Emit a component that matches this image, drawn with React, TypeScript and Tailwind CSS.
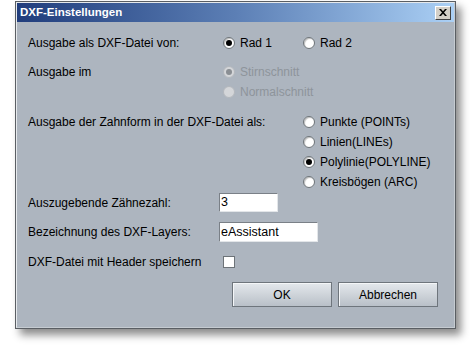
import React from "react";

function Radio({ checked = false, disabled = false }: { checked?: boolean; disabled?: boolean }) {
  return (
    <span
      className={
        "relative inline-flex h-[12px] w-[12px] shrink-0 items-center justify-center rounded-full border " +
        (disabled
          ? "border-[#b4b8bd] bg-[#d4d6d9]"
          : "border-[#6d7378] bg-white shadow-[inset_1px_1px_1px_rgba(0,0,0,0.25)]")
      }
    >
      {checked && (
        <span
          className={
            "h-[6px] w-[6px] rounded-full " + (disabled ? "bg-[#8a8e93]" : "bg-black")
          }
        />
      )}
    </span>
  );
}

function RadioItem({
  label,
  checked,
  disabled,
  className = "",
}: {
  label: string;
  checked?: boolean;
  disabled?: boolean;
  className?: string;
}) {
  return (
    <div className={"flex h-[20px] items-center gap-[5px] " + className}>
      <Radio checked={checked} disabled={disabled} />
      <span className={"whitespace-nowrap " + (disabled ? "text-[#8d949b]" : "text-black")}>
        {label}
      </span>
    </div>
  );
}

export default function App() {
  return (
    <div
      className="h-[345px] w-[470px] bg-white pl-[15px] pt-[1px]"
      style={{ fontFamily: '"Liberation Sans", Arial, sans-serif' }}
    >
      <div className="flex h-[328px] w-[441px] flex-col border border-[#5a5e63] bg-[#adb5bf] shadow-[5px_6px_8px_rgba(0,0,0,0.45)]">
        <div className="flex flex-1 flex-col border border-[#e6e9ec] border-r-[#c5cbd1] border-b-[#c5cbd1]">
          {/* Title bar */}
          <div className="flex h-[19px] items-center justify-between bg-gradient-to-r from-[#213d7c] via-[#5c7fb5] to-[#abd0f5] pl-[3px] pr-[3px]">
            <span className="text-[11.5px] font-bold leading-none text-white">DXF-Einstellungen</span>
            <span className="flex h-[14px] w-[16px] items-center justify-center border border-t-white border-l-white border-r-[#404040] border-b-[#404040] bg-[#d4d0c8]">
              <svg width="8" height="7" viewBox="0 0 8 7">
                <path d="M0 0 L2 0 L4 2.3 L6 0 L8 0 L5 3.5 L8 7 L6 7 L4 4.7 L2 7 L0 7 L3 3.5 Z" fill="#000" />
              </svg>
            </span>
          </div>

          {/* Content */}
          <div className="flex flex-1 flex-col pl-[11px] pt-[11px] text-[12px] leading-none text-black">
            <div className="grid grid-cols-[191px_1fr] items-start">
              {/* Row 1 */}
              <div className="flex h-[20px] items-center whitespace-nowrap">Ausgabe als DXF-Datei von:</div>
              <div className="flex pl-[4px]">
                <RadioItem label="Rad 1" checked className="w-[80px]" />
                <RadioItem label="Rad 2" />
              </div>

              {/* Row 2 */}
              <div className="mt-[9px] flex h-[20px] items-center whitespace-nowrap">Ausgabe im</div>
              <div className="mt-[9px] flex flex-col pl-[4px]">
                <RadioItem label="Stirnschnitt" checked disabled />
                <RadioItem label="Normalschnitt" disabled />
              </div>

              {/* Row 3 */}
              <div className="mt-[10px] flex h-[20px] items-center whitespace-nowrap">
                Ausgabe der Zahnform in der DXF-Datei als:
              </div>
              <div className="mt-[10px] flex flex-col pl-[84px]">
                <RadioItem label="Punkte (POINTs)" />
                <RadioItem label="Linien(LINEs)" />
                <RadioItem label="Polylinie(POLYLINE)" checked />
                <RadioItem label="Kreisbögen (ARC)" />
              </div>

              {/* Row 4 */}
              <div className="mt-[1px] flex h-[19px] items-center whitespace-nowrap">Auszugebende Zähnezahl:</div>
              <div className="mt-[1px]">
                <div className="flex h-[19px] w-[59px] items-center border border-[#7a8087] border-r-[#e3e6e9] border-b-[#e3e6e9] bg-white pl-[1px] text-[12.5px]">
                  3
                </div>
              </div>

              {/* Row 5 */}
              <div className="mt-[10px] flex h-[20px] items-center whitespace-nowrap">Bezeichnung des DXF-Layers:</div>
              <div className="mt-[10px]">
                <div className="flex h-[20px] w-[99px] items-center border border-[#7a8087] border-r-[#e3e6e9] border-b-[#e3e6e9] bg-white pl-[1px] text-[12.5px]">
                  eAssistant
                </div>
              </div>

              {/* Row 6 */}
              <div className="mt-[10px] flex h-[20px] items-center whitespace-nowrap">DXF-Datei mit Header speichern</div>
              <div className="mt-[10px] flex h-[20px] items-center pl-[4px]">
                <span className="h-[12px] w-[12px] border border-[#6d7378] bg-white" />
              </div>
            </div>

            {/* Buttons */}
            <div className="mt-[10px] flex justify-end gap-[6px] pr-[16px]">
              <button className="flex h-[25px] w-[100px] items-center justify-center border border-[#6e757c] bg-gradient-to-b from-[#e4e8ec] to-[#b9c0c8] text-[12px] text-black shadow-[inset_1px_1px_0_#f4f6f8]">
                OK
              </button>
              <button className="flex h-[25px] w-[100px] items-center justify-center border border-[#6e757c] bg-gradient-to-b from-[#e4e8ec] to-[#b9c0c8] text-[12px] text-black shadow-[inset_1px_1px_0_#f4f6f8]">
                Abbrechen
              </button>
            </div>
          </div>
        </div>
      </div>
    </div>
  );
}
